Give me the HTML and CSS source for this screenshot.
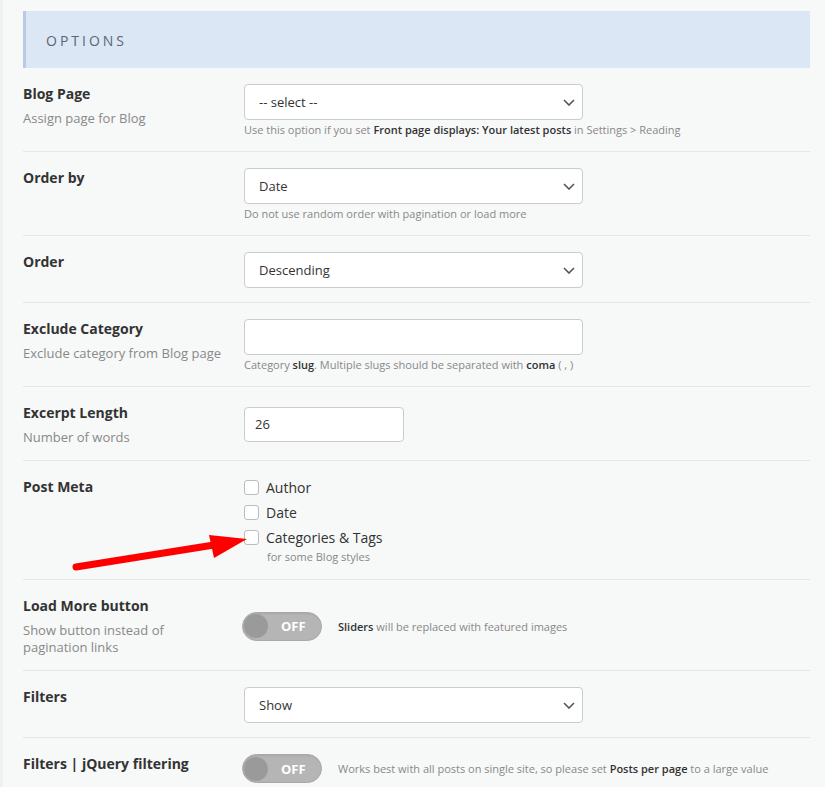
FILE: index.html
```html
<!DOCTYPE html>
<html lang="en">
<head>
    <meta charset="UTF-8">
    <meta name="viewport" content="width=device-width, initial-scale=1.0">
    <title>Blog Options</title>
    <link rel="stylesheet" href="styles.css">
</head>
<body>

    <div class="panel">
        <div class="panel-title">Options</div>

        <div class="row">
            <div class="label">
                <h4>Blog Page</h4>
                <p>Assign page for Blog</p>
            </div>
            <div class="field">
                <div class="select">
                    <span>-- select --</span>
                    <svg class="chevron" width="12" height="7" viewBox="0 0 12 7"><path d="M1 1l5 5 5-5" fill="none" stroke="#555" stroke-width="1.6"/></svg>
                </div>
                <div class="help">Use this option if you set <b>Front page displays: Your latest posts</b> in Settings &gt; Reading</div>
            </div>
        </div>

        <div class="row">
            <div class="label">
                <h4>Order by</h4>
            </div>
            <div class="field">
                <div class="select">
                    <span>Date</span>
                    <svg class="chevron" width="12" height="7" viewBox="0 0 12 7"><path d="M1 1l5 5 5-5" fill="none" stroke="#555" stroke-width="1.6"/></svg>
                </div>
                <div class="help">Do not use random order with pagination or load more</div>
            </div>
        </div>

        <div class="row">
            <div class="label">
                <h4>Order</h4>
            </div>
            <div class="field">
                <div class="select">
                    <span>Descending</span>
                    <svg class="chevron" width="12" height="7" viewBox="0 0 12 7"><path d="M1 1l5 5 5-5" fill="none" stroke="#555" stroke-width="1.6"/></svg>
                </div>
            </div>
        </div>

        <div class="row">
            <div class="label">
                <h4>Exclude Category</h4>
                <p>Exclude category from Blog page</p>
            </div>
            <div class="field">
                <div class="text-input"></div>
                <div class="help">Category <b>slug</b>. Multiple slugs should be separated with <b>coma</b> ( , )</div>
            </div>
        </div>

        <div class="row">
            <div class="label">
                <h4>Excerpt Length</h4>
                <p>Number of words</p>
            </div>
            <div class="field">
                <div class="text-input small">26</div>
            </div>
        </div>

        <div class="row">
            <div class="label">
                <h4>Post Meta</h4>
            </div>
            <div class="field">
                <div class="check"><span class="box"></span>Author</div>
                <div class="check"><span class="box"></span>Date</div>
                <div class="check"><span class="box"></span>Categories &amp; Tags</div>
                <div class="help indent">for some Blog styles</div>
            </div>
        </div>

        <div class="row row-center">
            <div class="label">
                <h4>Load More button</h4>
                <p>Show button instead of pagination links</p>
            </div>
            <div class="field inline">
                <div class="toggle"><span class="knob"></span>OFF</div>
                <div class="help"><b>Sliders</b> will be replaced with featured images</div>
            </div>
        </div>

        <div class="row">
            <div class="label">
                <h4>Filters</h4>
            </div>
            <div class="field">
                <div class="select">
                    <span>Show</span>
                    <svg class="chevron" width="12" height="7" viewBox="0 0 12 7"><path d="M1 1l5 5 5-5" fill="none" stroke="#555" stroke-width="1.6"/></svg>
                </div>
            </div>
        </div>

        <div class="row">
            <div class="label">
                <h4>Filters | jQuery filtering</h4>
            </div>
            <div class="field inline">
                <div class="toggle"><span class="knob"></span>OFF</div>
                <div class="help">Works best with all posts on single site, so please set <b>Posts per page</b> to a large value</div>
            </div>
        </div>
    </div>

    <!-- annotation arrow drawn over the page -->
    <svg class="arrow" width="825" height="787" viewBox="0 0 825 787">
        <line x1="76" y1="567" x2="214" y2="545" stroke="#f00" stroke-width="7" stroke-linecap="round"/>
        <polygon points="209,535 214,558 247,539" fill="#f00"/>
    </svg>

</body>
</html>
```

FILE: styles.css
```css
body {
    font-family: "Open Sans", Arial, sans-serif;
    margin: 0;
    padding: 0;
    background-color: #f7f8f8;
    color: #333;
    border-left: 3px solid #f1f1f1;
    min-height: 787px;
    position: relative;
}
.panel {
    padding: 11px 15px 0 20px;
}
.panel-title {
    height: 57px;
    line-height: 60px;
    background-color: #dce7f6;
    border-left: 3px solid #b9cae5;
    padding-left: 20px;
    font-size: 14px;
    letter-spacing: 3px;
    text-transform: uppercase;
    color: #5a6673;
}
.row {
    display: flex;
    align-items: flex-start;
    padding: 16px 0 14px;
    border-bottom: 1px solid #e5e7e7;
}
.row-center {
    align-items: center;
}
.label {
    width: 205px;
    flex-shrink: 0;
    margin-right: 16px;
}
.label h4 {
    margin: 0;
    font-size: 14px;
    line-height: 20px;
    font-weight: 700;
    color: #333;
}
.label p {
    margin: 6px 0 0;
    font-size: 13px;
    line-height: 17px;
    color: #888;
}
.field {
    flex: 1;
}
.field.inline {
    display: flex;
    align-items: center;
}
.select {
    width: 339px;
    height: 36px;
    box-sizing: border-box;
    display: flex;
    align-items: center;
    justify-content: space-between;
    padding: 0 7px 0 14px;
    background-color: #fff;
    border: 1px solid #ccc;
    border-radius: 4px;
    font-size: 13px;
    color: #333;
}
.chevron {
    flex-shrink: 0;
}
.text-input {
    width: 339px;
    height: 36px;
    box-sizing: border-box;
    background-color: #fff;
    border: 1px solid #ccc;
    border-radius: 4px;
    font-size: 13px;
    line-height: 34px;
    padding-left: 10px;
}
.text-input.small {
    width: 160px;
    height: 35px;
    line-height: 33px;
    margin: 4px 0;
}
.help {
    margin-top: 2px;
    font-size: 11px;
    line-height: 15px;
    color: #888;
}
.help b {
    font-weight: 600;
    color: #333;
}
.help.indent {
    padding-left: 23px;
    line-height: 17px;
    margin-top: 0;
}
.check {
    display: flex;
    align-items: center;
    height: 21px;
    margin-bottom: 4px;
    font-size: 14px;
    color: #333;
}
.check:nth-child(3) {
    margin-bottom: 0;
}
.box {
    width: 15px;
    height: 15px;
    box-sizing: border-box;
    border: 1px solid #b9bdc1;
    border-radius: 3px;
    background-color: #fff;
    margin-right: 7px;
}
.toggle {
    width: 80px;
    height: 29px;
    box-sizing: border-box;
    display: flex;
    align-items: center;
    margin-left: -2px;
    background-color: #b5b5b5;
    border: 1px solid #a9a9a9;
    border-radius: 15px;
    box-shadow: inset 1px 1px 2px rgba(0, 0, 0, 0.08);
    color: #fff;
    font-size: 13px;
    font-weight: 700;
}
.knob {
    width: 24px;
    height: 24px;
    border-radius: 50%;
    background-color: #9a9a9a;
    margin: 0 13px 0 1px;
}
.field.inline .help {
    margin: 0 0 0 16px;
}
.arrow {
    position: absolute;
    top: 0;
    left: -3px;
    pointer-events: none;
}
```
